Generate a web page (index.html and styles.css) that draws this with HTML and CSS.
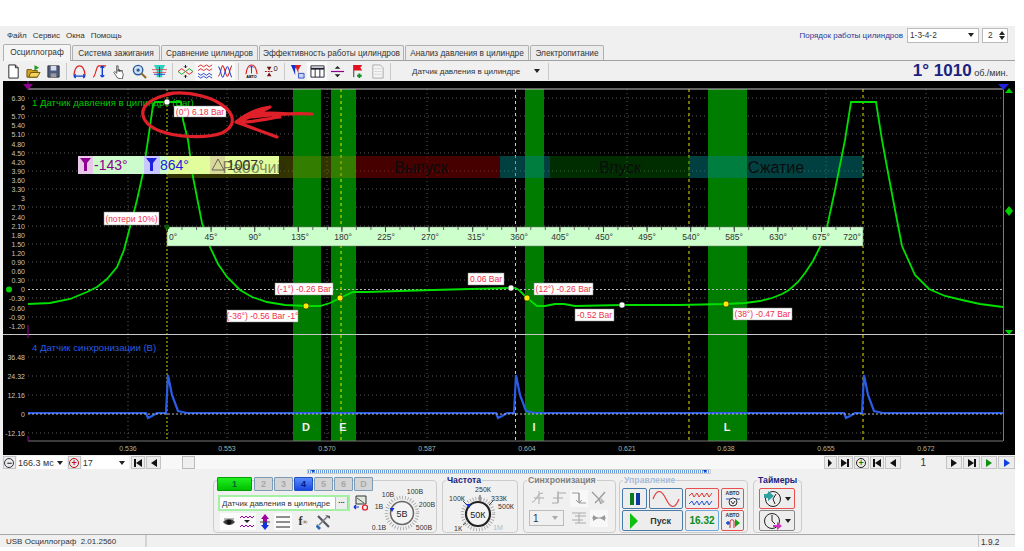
FILE: index.html
```html
<!DOCTYPE html>
<html lang="ru">
<head>
    <meta charset="UTF-8">
    <title>USB Осциллограф</title>
    <link rel="stylesheet" href="styles.css">
</head>
<body>
<div class="window">

    <div class="menu-row">
        <div class="menu"><span>Файл</span><span>Сервис</span><span>Окна</span><span>Помощь</span></div>
        <div class="order">
            <span class="order-label">Порядок работы цилиндров</span>
            <div class="order-select">1-3-4-2<i class="arrow"></i></div>
            <div class="order-spin">2<span class="spin"><i class="up"></i><i class="arrow"></i></span></div>
        </div>
    </div>

    <div class="tabs">
        <div class="tab active">Осциллограф</div>
        <div class="tab w88">Система зажигания</div>
        <div class="tab w97">Сравнение цилиндров</div>
        <div class="tab w144">Эффективность работы цилиндров</div>
        <div class="tab w124">Анализ давления в цилиндре</div>
        <div class="tab w74">Электропитание</div>
    </div>

    <div class="toolbar">
        <div class="tool"><svg class="ico" viewBox="0 0 16 16"><path d="M3 1h7l3 3v11H3z" fill="#fff" stroke="#222"/><path d="M10 1v3h3" fill="none" stroke="#222"/></svg></div>
        <div class="tool"><svg class="ico" viewBox="0 0 16 16"><path d="M1 6h5l1 1h5v7H1z" fill="#d9a520" stroke="#6b5200"/><path d="M3 14l2-5h10l-3 5z" fill="#f4d35e" stroke="#6b5200"/><path d="M9 7V1l5 3z" fill="#2a9a2a"/></svg></div>
        <div class="tool"><svg class="ico" viewBox="0 0 16 16"><path d="M2 2h12v12H2z" fill="#4a5a80" stroke="#333"/><path d="M5 2h6v5H5z" fill="#d8dce8"/><path d="M5 10h6v4H5z" fill="#999"/></svg></div>
        <i class="sep"></i>
        <div class="tool"><svg class="ico" viewBox="0 0 16 16"><path d="M2 12C3 3 6 2 8 2s5 1 6 10" fill="none" stroke="#e02020" stroke-width="1.300"/><path d="M2 13h12M2 13l2-2M2 13l2 2M14 13l-2-2M14 13l-2 2" fill="none" stroke="#1040d0" stroke-width="1.400"/></svg></div>
        <div class="tool"><svg class="ico" viewBox="0 0 16 16"><path d="M1 14c3 0 3-11 6-12h8" fill="none" stroke="#e02020" stroke-width="1.200"/><path d="M11 2v12M11 2l-2 2M11 2l2 2M11 14l-2-2M11 14l2-2" fill="none" stroke="#1040d0" stroke-width="1.500"/></svg></div>
        <div class="tool"><svg class="ico" viewBox="0 0 16 16"><path d="M6 15L2 9l1-1 2 2V2h1.500v6-2h1.500v2-1h1.500v1-1h1.500v2l1 2-1 5z" fill="#fff" stroke="#333" stroke-width=".8"/></svg></div>
        <div class="tool"><svg class="ico" viewBox="0 0 16 16"><circle cx="6.500" cy="6.500" r="5" fill="#cfe0f5" stroke="#2a5a9a" stroke-width="1.500"/><circle cx="6.500" cy="6.500" r="1.800" fill="#2a5a9a"/><path d="M10 10l5 5" stroke="#8a6a20" stroke-width="2.200"/></svg></div>
        <div class="tool"><svg class="ico" viewBox="0 0 16 16"><path d="M2 1h12l-3 6v7H5V7z" fill="#30d0c0"/><path d="M0 6h16M1 9h14" stroke="#e03040" stroke-width=".8"/><path d="M2 11h12" stroke="#2040d0"/><path d="M8 3v11" stroke="#1040a0"/></svg></div>
        <i class="sep"></i>
        <div class="tool"><svg class="ico" viewBox="0 0 16 16"><path d="M0 8l4-3 4 3 4 3 4-3" fill="none" stroke="#e02020"/><path d="M0 8l4 3 4-3 4-3 4 3" fill="none" stroke="#20a020"/><path d="M8 1v3M8 12v3M8 4L6.500 2.500M8 4l1.500-1.500M8 12l-1.500 1.500M8 12l1.500 1.500" stroke="#111"/></svg></div>
        <div class="tool on"><svg class="ico" viewBox="0 0 16 16"><g fill="none"><path d="M0 3l3-2 3 2 3-2 3 2 3-2" stroke="#e02020"/><path d="M0 7l3-2 3 2 3-2 3 2 3-2" stroke="#e02020"/><path d="M0 10l3 2 3-2 3 2 3-2 3 2" stroke="#2040d0"/><path d="M0 13l3 2 3-2 3 2 3-2 3 2" stroke="#2040d0"/></g></svg></div>
        <div class="tool on"><svg class="ico" viewBox="0 0 16 16"><g fill="none" stroke-width="1.100"><path d="M0 13C3 13 3 2 5 2s3 11 5 11 3-11 5-11" stroke="#e02020"/><path d="M0 3C3 3 3 14 5 14s3-11 5-11 3 11 5 11" stroke="#2040d0"/></g></svg></div>
        <i class="sep"></i>
        <div class="tool"><svg class="ico" viewBox="0 0 16 16"><path d="M2 11C3 3 6 1 8 1s5 2 6 10" fill="none" stroke="#e02020" stroke-width="1.200"/><path d="M8 2v8M6 4l2-2 2 2" fill="none" stroke="#1040d0"/><path d="M1 11h14v4H1z" fill="#eee"/><text class="ico-auto" x="8" y="15">АВТО</text></svg></div>
        <div class="tool"><svg class="ico" viewBox="0 0 16 16"><path d="M1 8h9" stroke="#b01010" stroke-width="1.300" stroke-dasharray="2 1"/><path d="M3 3h5L5.500 7zM3 13h5L5.500 9z" fill="#701010"/><text class="ico-num" x="10" y="7">0</text></svg></div>
        <i class="sep"></i>
        <div class="tool"><svg class="ico" viewBox="0 0 16 16"><path d="M1 1h7L5.500 5v7L4 8z" fill="#1030d0"/><path d="M5 1h7L9 6v4z" fill="#e02020"/><path d="M9 10h6v5H9z" fill="#c8d4ff" stroke="#3050c0"/></svg></div>
        <div class="tool on"><svg class="ico" viewBox="0 0 16 16"><path d="M1 2h14v12H1z" fill="#fff" stroke="#223"/><path d="M1 5h14" stroke="#223" stroke-width="2"/><path d="M5.500 5v9M10.500 5v9" stroke="#223"/></svg></div>
        <div class="tool"><svg class="ico" viewBox="0 0 16 16"><path d="M1 8h14" stroke="#900090" stroke-width="1.300"/><path d="M5 5l3-3 3 3zM5 11l3 3 3-3z" fill="#222"/></svg></div>
        <div class="tool"><svg class="ico" viewBox="0 0 16 16"><path d="M4 1v13" stroke="#333"/><path d="M4 1h9l-2 3 2 3H4z" fill="#e01020"/><path d="M10 10v5M7.500 12.500h5" stroke="#109020" stroke-width="2"/></svg></div>
        <div class="tool"><svg class="ico" viewBox="0 0 16 16"><path d="M3 1h8l3 3v11H3z" fill="#f4f4f4" stroke="#aaa"/><path d="M5 5h7M5 8h7M5 11h7" stroke="#bbb" stroke-dasharray="1 1"/></svg></div>
        <i class="sep"></i>
        <div class="sensor-combo">Датчик давления в цилиндре<i class="arrow"></i></div>
        <i class="sep"></i>
        <div class="rpm"><b>1° 1010</b> об./мин.</div>
    </div>

    <svg class="chart" viewBox="3 81 1012 374">
        <g class="grid">
            <path d="M28 98H1003M28 116H1003M28 134H1003M28 153H1003M28 171H1003M28 189H1003M28 207H1003M28 226H1003M28 244H1003M28 262H1003M28 280H1003M28 298H1003M28 317H1003"/>
            <path d="M28 357H1003M28 376H1003M28 395H1003M28 433H1003"/>
            <path d="M128 89V441M227 89V441M327 89V441M427 89V441M527 89V441M627 89V441M726 89V441M826 89V441M926 89V441"/>
        </g>

        <g class="bands">
            <rect x="293" y="89" width="28" height="352"/>
            <rect x="331" y="89" width="25" height="352"/>
            <rect x="525" y="89" width="19" height="352"/>
            <rect x="708" y="89" width="39" height="352"/>
        </g>

        <path class="zero" d="M28 289.500H1003"/>
        <path class="tdc dim" d="M167 89V441"/>
        <path class="tdc" d="M341 89V441M515.500 89V441M689 89V441M863 89V441"/>

        <rect class="ph-work" x="167" y="156" width="189" height="22"/>
        <rect class="ph-exhaust" x="356" y="156" width="144" height="22"/>
        <rect class="ph-overlap" x="500" y="156" width="50" height="22"/>
        <rect class="ph-intake" x="550" y="156" width="139" height="22"/>
        <rect class="ph-comp" x="689" y="156" width="174" height="22"/>
        <text class="ph-text" x="421" y="173">Выпуск</text>
        <text class="ph-text" x="620" y="173">Впуск</text>
        <text class="ph-text" x="776" y="173">Сжатие</text>

        <path class="frame" d="M3 334.500H1015"/>
        <path class="frame-low" d="M28 441H1003"/>
        <path class="frame" d="M28 89H1003"/>
        <path class="cursor-l" d="M28 81V89M28 325V338M28 436V441"/>
        <path class="cursor-r" d="M1003.500 89V441"/>
        <path class="tri-l" d="M23 84h10l-5 6z"/>
        <path class="tri-r" d="M998 84h11l-5.500 6z"/>
        <path class="mark" d="M1009 88l4 5h-8zM1009 206l4 5-4 5-4-5zM1009 335l4-5h-8z"/>
        <circle class="mark" cx="9" cy="289.500" r="3"/>

        <polyline class="wave" points="28,304 50,303 70,299 87,292 97,287 107,279 117,267 124,250 130,227 137,200 143,173 148,140 153,105 155,102 181,102 183,120 188,140 193,177 202,223 210,247 218,264 227,277 240,290 252,297 267,302 285,305 306,306 320,306 330,303 340,298 353,292 367,292 400,291 433,290 470,289 510,288 515,288 519,290 527,298 537,306 545,306 555,304 564,304 575,306 622,305 679,305 725,304 745,303 760,301 772,298 782,294 789,290 798,282 805,273 813,261 820,247 827,227 835,190 845,140 851,102 876,102 882,140 889,178 896,215 902,246 915,275 929,289 945,296 962,300 980,304 1003,307"/>
        <polyline class="sync" points="28,413 146,413 148,418 152,416 157,413 166,413 168,375 172,395 178,411 187,413 496,413 498,418 502,416 507,413 514,413 516,375 520,395 526,411 535,413 844,413 846,418 850,416 855,413 862,413 864,375 868,395 874,411 883,413 1003,413"/>
        <path class="zero" d="M28 414H1003"/>

        <rect class="ruler" x="167" y="227" width="696" height="19"/>
        <path class="ruler-minor" d="M167 228.500H863"/>
        <path class="ruler-major" d="M167 229.500H863"/>
        <g class="ruler-text">
            <text x="173" y="240">0°</text><text x="211" y="240">45°</text><text x="255" y="240">90°</text>
            <text x="300" y="240">135°</text><text x="343" y="240">180°</text><text x="386" y="240">225°</text>
            <text x="430" y="240">270°</text><text x="476" y="240">315°</text><text x="519" y="240">360°</text>
            <text x="560" y="240">405°</text><text x="604" y="240">450°</text><text x="647" y="240">495°</text>
            <text x="691" y="240">540°</text><text x="734" y="240">585°</text><text x="778" y="240">630°</text>
            <text x="821" y="240">675°</text><text x="852" y="240">720°</text>
        </g>

        <g class="y-axis">
            <text x="25" y="101">6.30</text><text x="25" y="110">6</text><text x="25" y="119">5.70</text>
            <text x="25" y="128">5.40</text><text x="25" y="137">5.10</text><text x="25" y="147">4.80</text>
            <text x="25" y="156">4.50</text><text x="25" y="165">4.20</text><text x="25" y="174">3.90</text>
            <text x="25" y="183">3.60</text><text x="25" y="192">3.30</text><text x="25" y="201">3</text>
            <text x="25" y="210">2.70</text><text x="25" y="220">2.40</text><text x="25" y="229">2.10</text>
            <text x="25" y="238">1.80</text><text x="25" y="247">1.50</text><text x="25" y="256">1.20</text>
            <text x="25" y="265">0.90</text><text x="25" y="274">0.60</text><text x="25" y="283">0.30</text>
            <text x="25" y="292">0</text><text x="25" y="301">-0.30</text><text x="25" y="311">-0.60</text>
            <text x="25" y="320">-0.90</text><text x="25" y="329">-1.20</text>
            <text x="25" y="360">36.48</text><text x="25" y="379">24.32</text><text x="25" y="398">12.16</text>
            <text x="25" y="417">0</text><text x="25" y="436">-12.16</text>
        </g>
        <g class="x-axis">
            <text x="128" y="451">0.536</text><text x="227" y="451">0.553</text><text x="327" y="451">0.570</text>
            <text x="427" y="451">0.587</text><text x="527" y="451">0.604</text><text x="627" y="451">0.621</text>
            <text x="726" y="451">0.638</text><text x="826" y="451">0.655</text><text x="926" y="451">0.672</text>
        </g>

        <text class="ch-title green" x="32" y="106">1 Датчик давления в цилиндре (Bar)</text>
        <text class="ch-title blue" x="32" y="351">4 Датчик синхронизации (В)</text>
        <g class="letters">
            <text x="306" y="431">D</text><text x="343" y="431">E</text><text x="534" y="431">I</text><text x="727" y="431">L</text>
        </g>

        <circle class="dot-dark" cx="167" cy="227" r="2.500"/>
        <g class="dots-white">
            <circle cx="167" cy="102" r="3"/><circle cx="511" cy="288" r="3"/><circle cx="622" cy="305" r="3"/>
        </g>
        <g class="dots-yellow">
            <circle cx="306" cy="306" r="3"/><circle cx="340" cy="298" r="3"/><circle cx="527" cy="298" r="3"/><circle cx="726" cy="304" r="3"/>
        </g>

        <g class="tags">
            <rect x="174" y="106" width="52" height="11"/><text x="200" y="115">(0°) 6.18 Bar</text>
            <rect x="104" y="212" width="55" height="13"/><text x="131.500" y="222">(потери 10%)</text>
            <rect x="275" y="283" width="58" height="12"/><text x="304" y="292">(-1°) -0.26 Bar</text>
            <rect x="227" y="310" width="71" height="12"/><text x="262.500" y="319">(-36°) -0.56 Bar -1°</text>
            <rect x="468" y="273" width="36" height="12"/><text x="486" y="282">0.06 Bar</text>
            <rect x="534" y="283" width="59" height="12"/><text x="563.500" y="292">(12°) -0.26 Bar</text>
            <rect x="575" y="309" width="39" height="12"/><text x="594.500" y="318">-0.52 Bar</text>
            <rect x="733" y="308" width="59" height="12"/><text x="762.500" y="317">(38°) -0.47 Bar</text>
        </g>

        <g class="cursor-box">
            <rect x="78" y="156" width="15" height="18" fill="#e8c8e8"/>
            <rect x="93" y="156" width="51" height="18" fill="#ccfccc"/>
            <rect x="144" y="156" width="16" height="18" fill="#c8c8ff"/>
            <rect x="160" y="156" width="7" height="18" fill="#ccfccc"/>
            <rect x="167" y="156" width="43" height="18" fill="#e2fd9c"/>
            <rect x="210" y="156" width="15" height="18" fill="#d9d99c"/>
            <rect x="225" y="156" width="54" height="18" fill="#e2fd9c"/>
            <path d="M80 158h11l-4 5v8h-3v-8z" fill="#900090"/>
            <path d="M146 158h11l-4 5v8h-3v-8z" fill="#2020e0"/>
            <path d="M218 159l6 11h-12z" fill="none" stroke="#665"/>
        </g>
        <text class="ph-text ghost" x="254" y="173">Рабочий</text>
        <text class="cur-val" x="94" y="170" fill="#900090">-143°</text>
        <text class="cur-val" x="160" y="170" fill="#2020e0">864°</text>
        <text class="cur-val" x="227" y="170" fill="#333">1007°</text>

        <!-- red pen marks made over the screenshot -->
        <g class="pen">
            <path d="M167 94C190 90 215 98 226 108C236 118 234 127 222 133C205 139 176 137 160 131C146 126 140 116 144 108C148 101 158 96 175 93"/>
            <path d="M312 114C295 113 275 114 250 117L236 122L277 137M236 122C248 113 260 108 270 107C262 112 255 114 251 116C262 112 275 113 290 114M240 122C255 122 265 119 280 117"/>
        </g>
    </svg>

    <div class="scroll-row">
        <div class="sbtn round"><i class="ring">−</i></div>
        <div class="scombo w48">166.3 мс<i class="arrow"></i></div>
        <div class="sbtn round"><i class="ring red">+</i></div>
        <div class="scombo w45">17<i class="arrow"></i></div>
        <div class="sbtn w15"><i class="go-first"></i></div>
        <div class="sbtn w15"><i class="go-left"></i></div>
        <div class="track"><div class="thumb"></div></div>
        <div class="sbtn w13"><i class="go-right tiny"></i></div>
        <div class="sbtn w15"><i class="go-last"></i></div>
        <div class="sbtn round wide"><i class="ring grn">+</i></div>
        <div class="sbtn w15"><i class="go-first"></i></div>
        <div class="sbtn w16"><i class="go-left"></i></div>
        <div class="page-no">1</div>
        <div class="sbtn w16"><i class="go-right"></i></div>
        <div class="sbtn w17"><i class="go-last"></i></div>
        <div class="sbtn w16"><i class="go-right gr"></i></div>
        <div class="sbtn w17"><i class="go-right bl"></i></div>
    </div>

    <div class="slider-row"><div class="slider"><i></i><i class="end"></i></div></div>

    <div class="controls">

        <div class="group g-channel">
            <div class="ch-left">
                <div class="channels">
                    <div class="ch ch-on">1</div>
                    <div class="ch">2</div>
                    <div class="ch">3</div>
                    <div class="ch ch-blue">4</div>
                    <div class="ch">5</div>
                    <div class="ch">6</div>
                    <div class="ch">D</div>
                </div>
                <div class="sensor-row">
                    <div class="sensor">Датчик давления в цилиндре<span class="dots">...</span></div>
                    <svg class="ico" viewBox="0 0 16 16"><path d="M3 1h10v8H3z" fill="#dfe8df" stroke="#333"/><path d="M4 3l7 5" stroke="#555"/><path d="M1 12h5M1 12l2-2M1 12l2 2" fill="none" stroke="#1030d0" stroke-width="1.200"/><circle cx="12" cy="12.500" r="2.500" fill="none" stroke="#e01020" stroke-width="1.200"/></svg>
                </div>
                <div class="ch-tools">
                    <div class="ctool on"><svg class="ico" viewBox="0 0 16 16"><path d="M2 8c3-4 9-4 12 0-3 4-9 4-12 0z" fill="#444"/><circle cx="8" cy="8" r="2.500" fill="#111"/><path d="M3 5h10" stroke="#777"/></svg></div>
                    <div class="ctool on"><svg class="ico" viewBox="0 0 16 16"><g fill="none" stroke="#a000a0"><path d="M1 4l2-2 2 2 2-2 2 2 2-2 2 2 2-2"/><path d="M1 13l2-2 2 2 2-2 2 2 2-2 2 2 2-2"/></g><path d="M5 6h6l-3 3z" fill="#222"/></svg></div>
                    <div class="ctool"><svg class="ico" viewBox="0 0 16 16"><path d="M8 0l4 5H10v3H6V5H4z" fill="#a000a0"/><path d="M8 16l-4-5h2V8h4v3h2z" fill="#1030e0"/><path d="M3 8h10" stroke="#444"/></svg></div>
                    <div class="ctool on"><svg class="ico" viewBox="0 0 16 16"><path d="M1 3h14M1 8h14M1 13h14" stroke="#222"/></svg></div>
                    <div class="ctool fx"><em>f</em><small>∞</small></div>
                    <div class="ctool"><svg class="ico" viewBox="0 0 16 16"><path d="M3 2l11 11" stroke="#556" stroke-width="2.200"/><path d="M13 2L4 11" stroke="#777" stroke-width="1.500"/><path d="M2 10l4 4-2 2-3-3z" fill="#2a6ab0"/><path d="M10 1l5 1v3z" fill="#556"/></svg></div>
                </div>
            </div>
            <svg class="dial-v" viewBox="372 480 64 51">
                <circle class="dial-ticks" cx="402" cy="512" r="15.500"/>
                <circle class="dial-knob gray" cx="402" cy="512" r="11.500"/>
                <path class="dial-pt" d="M389.500 507h5l-2.500 4z"/>
                <text class="dial-val" x="402" y="516">5В</text>
                <g class="dial-lab">
                    <text x="388" y="496">10В</text><text x="415" y="493">100В</text><text x="427" y="506">200В</text>
                    <text x="424" y="529">500В</text><text x="379" y="529">0.1В</text><text x="379" y="508">1В</text>
                </g>
            </svg>
        </div>

        <div class="group g-freq">
            <div class="group-title navy">Частота</div>
            <svg class="dial-f" viewBox="443 480 74 51">
                <circle class="dial-ticks" cx="478" cy="513" r="15.500"/>
                <circle class="dial-knob" cx="478" cy="513" r="12"/>
                <path class="dial-long" d="M463 500l4 4M480 494v6M493 500l-4 4M463 524l3-2"/>
                <path class="dial-pt" d="M465.500 503h5l-1 4z"/>
                <text class="dial-val" x="478" y="517">50К</text>
                <g class="dial-lab">
                    <text x="457" y="500">100К</text><text x="483" y="491">250К</text><text x="499" y="500">333К</text>
                    <text x="506" y="508">500К</text><text x="458" y="530">1К</text><text class="off" x="498" y="529">1М</text>
                </g>
            </svg>
        </div>

        <div class="group g-sync">
            <div class="group-title gray">Синхронизация</div>
            <div class="sync-grid">
                <div class="stool"><svg class="ico" viewBox="0 0 16 16"><path d="M1 12c5 0 4-9 11-9M8 1v13M3 8h10" fill="none" stroke="#aaa"/></svg></div>
                <div class="stool"><svg class="ico" viewBox="0 0 16 16"><path d="M1 13h6V3h8M7 1v12M2 8h10" fill="none" stroke="#aaa"/></svg></div>
                <div class="stool on"><svg class="ico" viewBox="0 0 16 16"><path d="M1 3h7v10h7M8 3v10M5 10l3 3 3-3" fill="none" stroke="#999"/></svg></div>
                <div class="stool"><svg class="ico" viewBox="0 0 16 16"><path d="M1 2l7 7 2 5M14 2L8 9l-4 4" fill="none" stroke="#999" stroke-width="1.300"/><path d="M9 7l5 5-4 2z" fill="#bbb"/></svg></div>
                <div class="sync-select">1<i class="arrow"></i></div>
                <div class="stool"><svg class="ico" viewBox="0 0 16 16"><path d="M1 3h14M4 6h11M1 10h11M4 13h11M8 3v10" stroke="#aaa" fill="none"/></svg></div>
                <div class="stool on"><svg class="ico" viewBox="0 0 16 16"><path d="M1 8h14" stroke="#999"/><path d="M2 5l5 3-5 3zM14 5L9 8l5 3z" fill="#999"/></svg></div>
            </div>
        </div>

        <div class="group g-ctrl">
            <div class="group-title pale">Управление</div>
            <div class="ctrl-grid">
                <div class="cbtn b-blue"><svg class="ico" viewBox="0 0 16 16"><path d="M3 2h4v12H3z" fill="#0a7a20"/><path d="M9 2h4v12H9z" fill="#0a3aa0"/></svg></div>
                <div class="cbtn b-blue"><svg class="ico wide" viewBox="0 0 28 16"><path d="M1 8C5-2 9-2 14 8s9 10 13 0" fill="none" stroke="#e04040" stroke-width="1.200"/></svg></div>
                <div class="cbtn b-red"><svg class="ico wide" viewBox="0 0 28 16"><g fill="none" stroke-width=".9"><path d="M1 5l3-3 2 4 3-4 2 4 3-4 2 4 3-4 2 4 3-4" stroke="#e02020"/><path d="M1 13l3-3 2 4 3-4 2 4 3-4 2 4 3-4 2 4 3-4" stroke="#1040d0"/></g></svg></div>
                <div class="cbtn b-red auto"><span>АВТО</span><svg class="ico small" viewBox="0 0 14 11"><path d="M0 3h14" stroke="#2050d0"/><circle cx="7" cy="6" r="4" fill="#eee" stroke="#333"/><path d="M5 5l2 3 2-3" fill="none" stroke="#333"/></svg></div>
                <div class="cbtn b-blue start"><svg class="ico tall" viewBox="0 0 10 18"><path d="M1 1l8 8-8 8z" fill="#10c010"/></svg><b>Пуск</b></div>
                <div class="cbtn b-sky digits">16.32</div>
                <div class="cbtn b-red auto"><span>АВТО</span><svg class="ico small" viewBox="0 0 14 11"><path d="M0 5h4M2 3v4" stroke="#1040d0" stroke-width="1.300"/><path d="M4 10V4c0-3 4-3 4 0v6" fill="none" stroke="#d02020"/><path d="M9 1l5 4-5 4z" fill="#10a010"/></svg></div>
            </div>
        </div>

        <div class="group g-timer">
            <div class="group-title navy">Таймеры</div>
            <div class="tbtn b-red"><svg class="ico clock" viewBox="0 0 18 18"><circle cx="9" cy="9" r="7.500" fill="#eee" stroke="#222"/><path d="M9 9l3-5M9 9l2 5" stroke="#222"/><path d="M0 4h4V1l6 5-6 5V8H0z" fill="#30a0a0"/></svg><i class="arrow"></i></div>
            <div class="tbtn b-gray"><svg class="ico clock" viewBox="0 0 18 18"><circle cx="8" cy="9" r="7.500" fill="#eee" stroke="#222"/><path d="M8 9V3M8 9l3 3" stroke="#222"/><path d="M9 13h4v-3l5 4-5 4v-3H9z" fill="#d030c0"/></svg><i class="arrow"></i></div>
        </div>
    </div>

    <div class="status">
        <div class="st-ver">USB Осциллограф&nbsp;&nbsp;2.01.2560</div>
        <div class="st-mid"></div>
        <div class="st-end">1.9.2</div>
    </div>
</div>
</body>
</html>
```
FILE: styles.css
```css
body {
    margin: 0;
    background: #fff;
    font-family: "Liberation Sans", Arial, sans-serif;
    font-size: 8.300px;
    color: #333;
    overflow: hidden;
}
i, em {
    font-style: normal;
}
.window {
    width: 1015px;
    height: 521px;
    margin-top: 26px;
    background: #f0f0f0;
}
.arrow {
    display: inline-block;
    width: 0;
    height: 0;
    border-left: 3px solid transparent;
    border-right: 3px solid transparent;
    border-top: 4px solid #222;
}
.ico {
    display: block;
    width: 16px;
    height: 16px;
}

/* menu */
.menu-row {
    display: flex;
    justify-content: space-between;
    align-items: center;
    height: 18px;
    padding-left: 7px;
    padding-right: 7px;
}
.menu {
    font-size: 8px;
}
.menu span {
    margin-right: 6px;
}
.order {
    display: flex;
    align-items: center;
}
.order-label {
    color: #2a3a9a;
    font-size: 8px;
    margin-right: 4px;
}
.order-select, .order-spin {
    display: flex;
    align-items: center;
    justify-content: space-between;
    box-sizing: border-box;
    height: 15px;
    background: #fff;
    border: 1px solid #bbb;
    padding: 0 2px;
}
.order-select {
    width: 72px;
    margin-right: 3px;
}
.order-select .arrow {
    margin-right: 2px;
}
.order-spin {
    width: 26px;
    padding-left: 5px;
}
.spin {
    display: flex;
    flex-direction: column;
    gap: 1px;
}
.up {
    display: block;
    width: 0;
    height: 0;
    border-left: 3px solid transparent;
    border-right: 3px solid transparent;
    border-bottom: 4px solid #222;
}

/* tabs */
.tabs {
    display: flex;
    align-items: flex-end;
    height: 16px;
    padding-left: 3px;
    gap: 1px;
}
.tab {
    box-sizing: border-box;
    height: 15px;
    line-height: 14px;
    text-align: center;
    white-space: nowrap;
    background: #ececec;
    border: 1px solid #b0b0b0;
    border-bottom: none;
    border-radius: 2px 2px 0 0;
}
.tab.active {
    width: 68px;
    height: 17px;
    background: #f5f5f5;
    margin-bottom: -1px;
    position: relative;
}
.w88 { width: 88px; }
.w97 { width: 97px; }
.w144 { width: 145px; }
.w124 { width: 124px; }
.w74 { width: 74px; }

/* toolbar */
.toolbar {
    display: flex;
    align-items: center;
    box-sizing: border-box;
    height: 21px;
    margin-left: 3px;
    border-top: 1px solid #a0a0a0;
}
.tool {
    display: flex;
    justify-content: center;
    align-items: center;
    width: 20px;
    height: 19px;
}
.tool .ico {
    width: 15px;
    height: 15px;
}
.tool.on {
    background: #fafafa;
}
.sep {
    width: 1px;
    height: 17px;
    margin: 0 2px 0 3px;
    background: #c8c8c8;
}
.ico-auto {
    font-size: 4px;
    font-weight: bold;
    text-anchor: middle;
}
.ico-num {
    font-size: 8px;
    fill: #222;
}
.sensor-combo {
    display: flex;
    align-items: center;
    justify-content: space-between;
    width: 128px;
    padding-left: 19px;
    padding-right: 5px;
    font-size: 8px;
    white-space: nowrap;
}
.rpm {
    margin-left: auto;
    margin-right: 7px;
    font-size: 9px;
    color: #333;
}
.rpm b {
    font-size: 17px;
    color: #1a237e;
}

/* chart */
.chart {
    display: block;
    width: 1012px;
    height: 374px;
    margin-left: 3px;
    background: #000;
}
.chart text {
    font-family: "Liberation Sans", Arial, sans-serif;
}
.grid path {
    fill: none;
    stroke: #5a5a5a;
    stroke-dasharray: 1 3;
}
.bands rect {
    fill: #007c00;
}
.zero {
    stroke: #bbb;
    stroke-dasharray: 2 2;
    fill: none;
}
.tdc {
    fill: none;
    stroke: #e6e600;
    stroke-dasharray: 3 3;
}
.tdc.dim {
    stroke: #8a8a10;
    stroke-width: 1.500;
    stroke-dasharray: 2 2;
}
.ph-work { fill: rgba(128, 128, 0, 0.4); }
.ph-exhaust { fill: rgba(128, 0, 0, 0.55); }
.ph-overlap { fill: rgba(0, 128, 128, 0.5); }
.ph-intake { fill: rgba(0, 128, 0, 0.35); }
.ph-comp { fill: rgba(0, 128, 128, 0.5); }
.ph-text {
    font-size: 16px;
    text-anchor: middle;
    fill: #0c0c0c;
}
.ph-text.ghost {
    fill: rgba(40, 40, 40, 0.55);
}
.frame {
    stroke: #c8c8c8;
    fill: none;
}
.frame-low {
    stroke: #777;
    fill: none;
}
.cursor-l {
    stroke: #a000a0;
    fill: none;
}
.cursor-r {
    stroke: #6a6aff;
    fill: none;
}
.tri-l { fill: #900090; }
.tri-r { fill: #2020e0; }
.mark { fill: #00d000; }
.wave {
    fill: none;
    stroke: #00e000;
    stroke-width: 1.800;
}
.sync {
    fill: none;
    stroke: #2a5ce6;
    stroke-width: 2.200;
}
.ruler {
    fill: #ccffcc;
    stroke: #777;
    stroke-width: 0.500;
}
.ruler-minor {
    stroke: #666;
    stroke-width: 3;
    stroke-dasharray: 1 13.530;
}
.ruler-major {
    stroke: #444;
    stroke-width: 5;
    stroke-dasharray: 1 42.600;
}
.ruler-text text {
    font-size: 8.500px;
    text-anchor: middle;
    fill: #333;
}
.y-axis text {
    font-size: 7px;
    text-anchor: end;
    fill: #c4c4c4;
}
.x-axis text {
    font-size: 7px;
    text-anchor: middle;
    fill: #a8b4a8;
}
.ch-title {
    font-size: 9.600px;
}
.ch-title.green { fill: #00c800; }
.ch-title.blue { fill: #2a5ce6; }
.letters text {
    font-size: 11px;
    font-weight: bold;
    text-anchor: middle;
    fill: #eee;
}
.dot-dark { fill: #006000; }
.dots-white circle {
    fill: #fff;
    stroke: #111;
    stroke-width: 0.500;
}
.dots-yellow circle {
    fill: #ffea00;
    stroke: #111;
    stroke-width: 0.500;
}
.tags rect {
    fill: #fff;
    stroke: #888;
    stroke-width: 0.500;
}
.tags text {
    font-size: 8.500px;
    text-anchor: middle;
    fill: #f03048;
}
.cur-val {
    font-size: 14px;
}
.pen path {
    fill: none;
    stroke: #e02028;
    stroke-width: 3.200;
    stroke-linecap: round;
    stroke-linejoin: round;
}

/* scroll row */
.scroll-row {
    display: flex;
    align-items: center;
    height: 13px;
    padding-left: 3px;
    margin-top: 1px;
}
.sbtn {
    display: flex;
    align-items: center;
    justify-content: center;
    box-sizing: border-box;
    height: 13px;
    background: #ececec;
    border: 1px solid #c4c4c4;
}
.round {
    width: 13px;
    margin-right: 1px;
}
.round.wide {
    width: 15px;
    margin-right: 0;
    margin-left: 1px;
}
.ring {
    box-sizing: border-box;
    width: 10px;
    height: 10px;
    line-height: 8px;
    text-align: center;
    font-size: 9px;
    font-weight: bold;
    color: #223;
    border: 1px solid #334;
    border-radius: 50%;
}
.ring.red { color: #c01010; border-color: #c01010; }
.ring.grn { color: #108010; border-color: #222; }
.w13 { width: 13px; }
.w15 { width: 15px; margin-left: 1px; }
.w16 { width: 16px; margin-left: 1px; }
.w17 { width: 17px; margin-left: 1px; }
.scombo {
    display: flex;
    align-items: center;
    justify-content: space-between;
    box-sizing: border-box;
    height: 13px;
    background: #fff;
    padding: 0 4px 0 1px;
    margin-right: 1px;
    font-size: 9px;
    white-space: nowrap;
}
.w48 { width: 50px; }
.w45 { width: 47px; }
.track {
    width: 665px;
    height: 13px;
    background: #f8f8f8;
    padding-left: 21px;
    box-sizing: border-box;
}
.thumb {
    width: 13px;
    height: 13px;
    box-sizing: border-box;
    background: #efefef;
    border: 1px solid #bbb;
}
.page-no {
    width: 44px;
    text-align: center;
    font-size: 10px;
}
.go-right, .go-last::before {
    display: inline-block;
    width: 0;
    height: 0;
    border-top: 4px solid transparent;
    border-bottom: 4px solid transparent;
    border-left: 6px solid #111;
}
.go-left, .go-first::after {
    display: inline-block;
    width: 0;
    height: 0;
    border-top: 4px solid transparent;
    border-bottom: 4px solid transparent;
    border-right: 6px solid #111;
}
.go-last::before, .go-first::after {
    content: "";
}
.go-last, .go-first {
    display: flex;
    align-items: center;
}
.go-last::after, .go-first::before {
    content: "";
    width: 2px;
    height: 8px;
    background: #111;
}
.tiny {
    border-left-width: 4px;
}
.gr { border-left-color: #109010; }
.bl { border-left-color: #1040e0; }

.slider-row {
    height: 6px;
    padding-left: 307px;
}
.slider {
    display: flex;
    align-items: center;
    justify-content: space-between;
    box-sizing: border-box;
    width: 404px;
    height: 5px;
    border: 1px solid #ccc;
    background: repeating-linear-gradient(90deg, #6a9ae0 0 1px, #f4f4f4 1px 2px);
}
.slider i {
    width: 0;
    height: 0;
    margin-left: 3px;
    border-left: 2px solid transparent;
    border-right: 2px solid transparent;
    border-top: 3px solid #1040d0;
}
.slider .end {
    margin: 0 3px 0 0;
}

/* bottom controls */
.controls {
    display: flex;
    align-items: flex-start;
    box-sizing: border-box;
    height: 60px;
    padding-top: 5px;
    padding-left: 213px;
    gap: 5px;
    border-bottom: 1px solid #a8a8a8;
}
.group {
    position: relative;
    box-sizing: border-box;
    height: 53px;
    border: 1px solid #ccc;
    border-radius: 4px;
}
.group-title {
    position: absolute;
    top: -7px;
    left: 3px;
    padding: 0 1px;
    background: #f0f0f0;
    font-size: 8.700px;
    font-weight: bold;
    line-height: 12px;
    white-space: nowrap;
}
.navy { color: #1a237e; }
.gray { color: #808080; }
.pale { color: #a8bcd8; }

.g-channel {
    display: flex;
    width: 224px;
    padding-left: 3px;
}
.ch-left {
    width: 156px;
}
.channels {
    display: flex;
    gap: 1px;
    margin-top: -4px;
}
.ch {
    box-sizing: border-box;
    width: 19px;
    height: 14px;
    line-height: 12px;
    text-align: center;
    font-size: 9px;
    font-weight: bold;
    color: #a8a8a8;
    background: #d4d4d4;
    border: 1px solid #7a9ab8;
    border-radius: 1px;
}
.ch-on {
    width: 35px;
    margin-right: 1px;
    color: #063;
    background: linear-gradient(#20f020, #00c000);
    border-color: #00a000;
}
.ch-blue {
    color: #001a80;
    background: linear-gradient(#5a8aff, #1a4ae0);
    border-color: #2050c0;
}
.sensor-row {
    display: flex;
    align-items: center;
    gap: 3px;
    margin-top: 4px;
    margin-left: 1px;
}
.sensor {
    display: flex;
    align-items: center;
    justify-content: space-between;
    box-sizing: border-box;
    width: 132px;
    height: 16px;
    padding: 0 1px 0 3px;
    font-size: 8px;
    white-space: nowrap;
    background: #fff;
    border: 1px solid #a4f0a4;
    outline: 1px solid #a4f0a4;
    outline-offset: -2px;
}
.dots {
    width: 11px;
    height: 12px;
    line-height: 8px;
    text-align: center;
    font-weight: bold;
    background: #eee;
    border: 1px solid #bbb;
}
.ch-tools {
    display: flex;
    margin-top: 2px;
    margin-left: 3px;
}
.ctool {
    display: flex;
    align-items: center;
    justify-content: center;
    width: 18px;
    height: 17px;
}
.ctool.on {
    background: #fbfbfb;
}
.fx {
    width: 22px;
    font-family: "Liberation Serif", serif;
    font-weight: bold;
    font-size: 12px;
}
.fx small {
    font-size: 7px;
}
.dial-v {
    display: block;
    width: 64px;
    height: 51px;
    margin-left: -1px;
}
.dial-ticks {
    fill: none;
    stroke: #a0a0a0;
    stroke-width: 3.500;
    stroke-dasharray: 0.800 2;
}
.dial-knob {
    fill: #f4f4f4;
    stroke: #222;
    stroke-width: 2.200;
}
.dial-knob.gray {
    stroke: #666;
    stroke-width: 1.500;
}
.dial-long {
    stroke: #444;
    fill: none;
}
.dial-pt {
    fill: #1030e0;
}
.dial-val {
    font-family: "Liberation Sans", Arial, sans-serif;
    font-size: 9px;
    text-anchor: middle;
    fill: #222;
}
.dial-lab text {
    font-family: "Liberation Sans", Arial, sans-serif;
    font-size: 7px;
    text-anchor: middle;
    fill: #333;
}
.dial-lab .off {
    fill: #b8b8b8;
}
.g-freq {
    width: 76px;
}
.dial-f {
    display: block;
    width: 74px;
    height: 51px;
}
.g-sync {
    width: 93px;
}
.sync-grid {
    display: grid;
    grid-template-columns: repeat(4, 20px);
    grid-auto-rows: 20px;
    align-items: center;
    justify-items: center;
    padding: 7px 0 0 5px;
}
.stool {
    display: flex;
    align-items: center;
    justify-content: center;
    width: 18px;
    height: 17px;
}
.stool.on {
    background: #f8f8f8;
}
.sync-select {
    grid-column: span 2;
    display: flex;
    align-items: center;
    justify-content: space-between;
    box-sizing: border-box;
    width: 35px;
    height: 16px;
    padding: 0 5px 0 3px;
    margin-right: 5px;
    font-size: 10px;
    border: 1px solid #bbb;
}
.sync-select .arrow {
    border-top-color: #aaa;
}
.g-ctrl {
    width: 129px;
    margin-left: -2px;
}
.ctrl-grid {
    display: grid;
    grid-template-columns: 25px 34px 34px 23px;
    grid-template-rows: 21px 21px;
    column-gap: 2px;
    row-gap: 1px;
    padding: 7px 0 0 2px;
}
.cbtn, .tbtn {
    display: flex;
    align-items: center;
    justify-content: center;
    box-sizing: border-box;
    background: #ededed;
    border: 1px solid #888;
    border-radius: 2px;
}
.b-blue { border-color: #4a7ba8; }
.b-red { border-color: #e85050; }
.b-sky { border-color: #70a8e0; }
.b-gray { border-color: #888; }
.ico.wide {
    width: 28px;
}
.ico.small {
    width: 14px;
    height: 11px;
}
.ico.tall {
    width: 10px;
    height: 18px;
}
.ico.clock {
    width: 18px;
    height: 18px;
}
.auto {
    flex-direction: column;
    font-size: 5px;
    font-weight: bold;
    line-height: 6px;
}
.start {
    grid-column: span 2;
    justify-content: space-between;
    padding: 0 11px 0 6px;
    font-size: 9px;
}
.digits {
    color: #0a8a20;
    font-size: 10px;
    font-weight: bold;
}
.g-timer {
    width: 49px;
    padding-top: 7px;
}
.tbtn {
    gap: 3px;
    width: 36px;
    height: 21px;
    margin: 0 0 1px 5px;
}
.status {
    display: flex;
    height: 14px;
    line-height: 14px;
}
.st-ver {
    width: 139px;
    padding-left: 6px;
    font-size: 8px;
    white-space: nowrap;
    border-right: 2px solid #d4d4d4;
}
.st-mid {
    flex: 1;
}
.st-end {
    width: 34px;
    padding-left: 2px;
    border-left: 1px solid #c4c4c4;
}
```
